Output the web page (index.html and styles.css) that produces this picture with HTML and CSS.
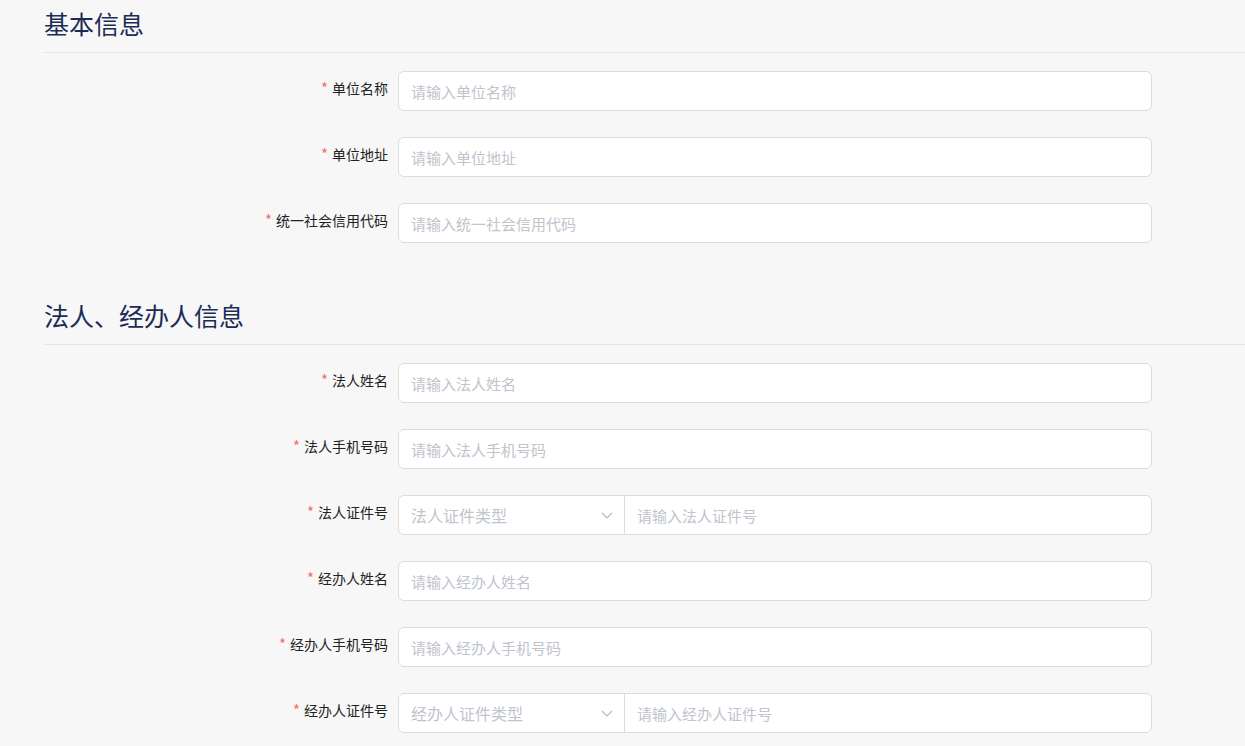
FILE: index.html
```html
<!DOCTYPE html>
<html lang="zh-CN">
<head>
  <meta charset="UTF-8">
  <meta name="viewport" content="width=device-width, initial-scale=1.0">
  <title>单位信息</title>
  <link rel="stylesheet" href="styles.css">
</head>
<body>
  <div class="page">
    <div class="section">
      <h2 class="section-title">基本信息</h2>
      <div class="form-item">
        <label class="form-label required">单位名称</label>
        <input class="form-input" type="text" placeholder="请输入单位名称">
      </div>
      <div class="form-item">
        <label class="form-label required">单位地址</label>
        <input class="form-input" type="text" placeholder="请输入单位地址">
      </div>
      <div class="form-item">
        <label class="form-label required">统一社会信用代码</label>
        <input class="form-input" type="text" placeholder="请输入统一社会信用代码">
      </div>
    </div>

    <div class="section">
      <h2 class="section-title">法人、经办人信息</h2>
      <div class="form-item">
        <label class="form-label required">法人姓名</label>
        <input class="form-input" type="text" placeholder="请输入法人姓名">
      </div>
      <div class="form-item">
        <label class="form-label required">法人手机号码</label>
        <input class="form-input" type="text" placeholder="请输入法人手机号码">
      </div>
      <div class="form-item">
        <label class="form-label required">法人证件号</label>
        <div class="input-group">
          <div class="select">
            <span class="select-text">法人证件类型</span>
            <svg class="select-arrow" width="12" height="7" viewBox="0 0 12 7"><path d="M1 1l5 5 5-5" fill="none" stroke="#b4b8c0" stroke-width="1.2"/></svg>
          </div>
          <input class="group-input" type="text" placeholder="请输入法人证件号">
        </div>
      </div>
      <div class="form-item">
        <label class="form-label required">经办人姓名</label>
        <input class="form-input" type="text" placeholder="请输入经办人姓名">
      </div>
      <div class="form-item">
        <label class="form-label required">经办人手机号码</label>
        <input class="form-input" type="text" placeholder="请输入经办人手机号码">
      </div>
      <div class="form-item last">
        <label class="form-label required">经办人证件号</label>
        <div class="input-group">
          <div class="select">
            <span class="select-text">经办人证件类型</span>
            <svg class="select-arrow" width="12" height="7" viewBox="0 0 12 7"><path d="M1 1l5 5 5-5" fill="none" stroke="#b4b8c0" stroke-width="1.2"/></svg>
          </div>
          <input class="group-input" type="text" placeholder="请输入经办人证件号">
        </div>
      </div>
    </div>
  </div>
</body>
</html>
```

FILE: styles.css
```css
body {
  margin: 0;
  background: #f7f7f7;
  font-family: "Noto Sans CJK SC", "Noto Sans", sans-serif;
}
.page {
  padding-left: 44px;
}
.section {
  padding-bottom: 23px;
}
.section:last-child {
  padding-bottom: 0;
}
.section-title {
  margin: 0 0 18px;
  padding: 6px 0 12px;
  font-size: 25px;
  font-weight: normal;
  line-height: 34px;
  color: #1d2b57;
  border-bottom: 1px solid #e3e5ea;
}
.form-item {
  display: flex;
  margin-bottom: 26px;
}
.form-item.last {
  margin-bottom: 12px;
}
.form-label {
  width: 344px;
  margin-right: 10px;
  text-align: right;
  font-size: 14px;
  line-height: 33px;
  color: #222;
}
.required::before {
  content: "*";
  color: #f56c6c;
  margin-right: 4px;
  font-size: 15px;
}
.form-input {
  box-sizing: border-box;
  width: 754px;
  height: 40px;
  padding: 0 12px;
  border: 1px solid #dcdcdc;
  border-radius: 6px;
  background: #fff;
  font-family: inherit;
  font-size: 15px;
  color: #303133;
  outline: none;
}
.form-input::placeholder,
.group-input::placeholder {
  color: #c0c4cc;
}
.input-group {
  box-sizing: border-box;
  display: flex;
  width: 754px;
  height: 40px;
  border: 1px solid #dcdcdc;
  border-radius: 6px;
  background: #fff;
  overflow: hidden;
}
.select {
  box-sizing: border-box;
  display: flex;
  align-items: center;
  justify-content: space-between;
  width: 226px;
  padding: 0 11px 0 12px;
  border-right: 1px solid #dcdcdc;
}
.select-text {
  font-size: 16px;
  color: #c0c4cc;
}
.group-input {
  flex: 1;
  border: none;
  padding: 0 12px;
  font-family: inherit;
  font-size: 15px;
  background: transparent;
  outline: none;
}
```
